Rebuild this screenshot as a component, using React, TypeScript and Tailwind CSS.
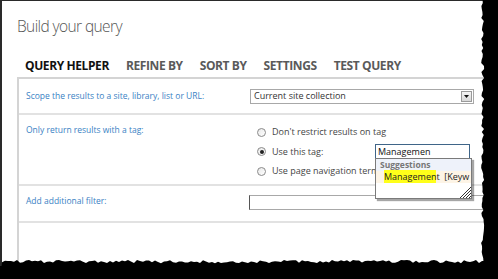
import React from "react";

function tornPoints(): string {
  let seed = 7;
  const rnd = () => {
    seed = (seed * 9301 + 49297) % 233280;
    return seed / 233280;
  };
  const pts: string[] = [];
  for (let y = 0; y <= 262; y += 3) {
    const x = 482 + rnd() * 3.2 - 1;
    pts.push(`${x.toFixed(1)},${y}`);
  }
  for (let x = 482; x >= 0; x -= 3) {
    const y = 261 + rnd() * 3.2 - 1;
    pts.push(`${x},${y.toFixed(1)}`);
  }
  pts.push("0,279", "498,279", "498,0");
  return pts.join(" ");
}

const TORN = tornPoints();

function Radio({ checked }: { checked?: boolean }) {
  return (
    <span className="relative inline-flex h-[9px] w-[9px] shrink-0 items-center justify-center rounded-full border border-[#8a8a8a] bg-gradient-to-br from-[#e8e8e8] to-white">
      {checked && <span className="h-[4px] w-[4px] rounded-full bg-[#222]" />}
    </span>
  );
}

export default function App() {
  const tabs = ["QUERY HELPER", "REFINE BY", "SORT BY", "SETTINGS", "TEST QUERY"];
  return (
    <div
      className="relative h-[279px] w-[498px] overflow-hidden bg-black"
      style={{ fontFamily: '"Open Sans", "Noto Sans", sans-serif' }}
    >
      <div className="flex h-[266px] w-[488px] flex-col border-l-2 border-t border-[#2a2a2a] bg-white pl-[15px]">
        <div className="mt-[14px] text-[15.5px] font-light leading-[22px] tracking-[-0.6px] text-[#555]">
          Build your query
        </div>
        <div className="mt-[21px] flex gap-[17px] pl-[8px] text-[12px] font-bold leading-[16px] tracking-[-0.4px] text-[#5a5a5a]">
          {tabs.map((t, i) => (
            <span key={t} className={i === 0 ? "text-[#111]" : ""}>
              {t}
            </span>
          ))}
        </div>
        <div className="mt-[3px] flex flex-1 flex-col border-l-2 border-t-2 border-[#d4d4d4]">
          {/* row 1 */}
          <div className="flex h-[36px] items-center border-b-2 border-[#e2e2e2]">
            <div className="w-[231px] pl-[7px] text-[8.5px] leading-[12px] text-[#3a82c4]">
              Scope the results to a site, library, list or URL:
            </div>
            <div className="flex h-[15px] w-[224px] items-center border border-[#a8a8a8] pl-[3px] pr-[1px] text-[9px] text-[#333]">
              <span className="flex-1 leading-[12px]">Current site collection</span>
              <span className="flex h-[11px] w-[11px] items-center justify-center border border-[#9a9a9a] bg-gradient-to-b from-[#f4f4f4] to-[#d8d8d8]">
                <svg width="5" height="3" viewBox="0 0 5 3">
                  <path d="M0 0H5L2.5 3Z" fill="#111" />
                </svg>
              </span>
            </div>
          </div>
          {/* row 2 */}
          <div className="flex h-[71px] border-b-2 border-[#e2e2e2]">
            <div className="w-[231px] pl-[7px] pt-[9px] text-[8.5px] leading-[12px] text-[#3a82c4]">
              Only return results with a tag:
            </div>
            <div className="flex flex-col gap-[6px] pl-[7px] pt-[11px] text-[9px] leading-[12px] text-[#444]">
              <div className="flex items-center gap-[6px]">
                <Radio />
                <span>Don&apos;t restrict results on tag</span>
              </div>
              <div className="flex items-center gap-[6px]">
                <Radio checked />
                <span className="w-[97px]">Use this tag:</span>
                <div className="relative">
                  <div className="flex h-[15px] w-[95px] items-center border border-[#3f6588] bg-white pl-[2px] text-[9px] text-[#111]">
                    Managemen
                  </div>
                  <div className="absolute left-0 top-[14px] z-10 h-[41px] w-[97px] overflow-hidden border border-[#7a7a7a] bg-white shadow-[2px_2px_1px_rgba(0,0,0,0.35)]">
                    <div className="bg-[#eef2fa] pl-[4px] text-[8.5px] font-bold leading-[12px] text-[#777]">
                      Suggestions
                    </div>
                    <div className="whitespace-nowrap bg-[#fdf4e6] pl-[8px] text-[9px] leading-[12px] text-[#222]">
                      <span className="bg-[#ffff1a]">Managemen</span>t&nbsp;&nbsp;[Keyw
                    </div>
                    <svg className="absolute bottom-0 right-0" width="12" height="12" viewBox="0 0 12 12">
                      <path d="M12 1L1 12M12 4L4 12M12 7L7 12M12 10L10 12" stroke="#333" strokeWidth="1" />
                    </svg>
                  </div>
                </div>
              </div>
              <div className="flex items-center gap-[6px]">
                <Radio />
                <span className="whitespace-nowrap">Use page navigation terms</span>
              </div>
            </div>
          </div>
          {/* row 3 */}
          <div className="flex h-[37px] border-b-2 border-[#e2e2e2]">
            <div className="w-[231px] pl-[7px] pt-[9px] text-[8.5px] leading-[12px] text-[#3a82c4]">
              Add additional filter:
            </div>
            <div className="mt-[9px] h-[15px] w-[240px] border border-[#a8a8a8] border-l-[#555]" />
          </div>
          <div className="flex-1" />
        </div>
      </div>
      <svg className="pointer-events-none absolute left-0 top-0" width="498" height="279">
        <polygon points={TORN} fill="#000" />
      </svg>
    </div>
  );
}
